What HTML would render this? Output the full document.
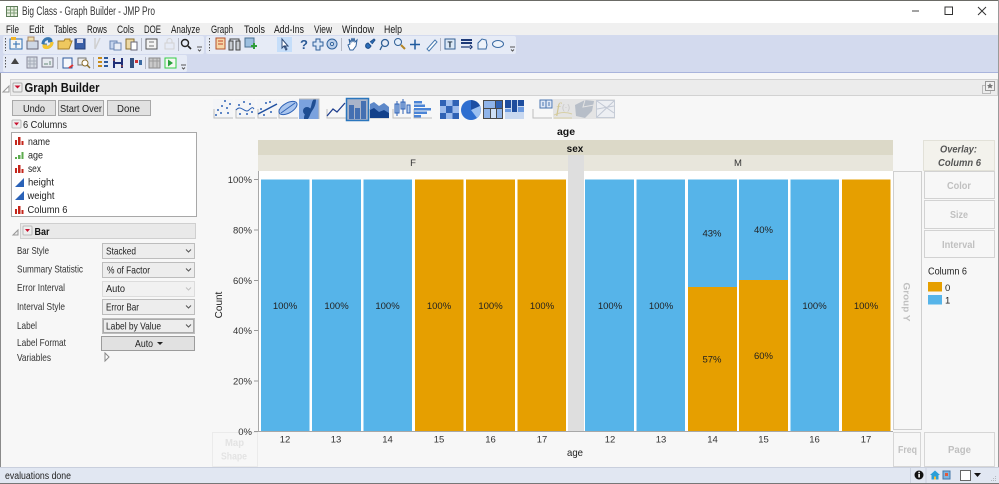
<!DOCTYPE html>
<html><head><meta charset="utf-8"><title>Big Class - Graph Builder - JMP Pro</title>
<style>
html,body{margin:0;padding:0;background:#fff;width:999px;height:484px;overflow:hidden}
svg{display:block}
text{font-family:"Liberation Sans",sans-serif;font-size:10px;fill:#222}
.m{font-size:11px;fill:#1a1a1a}
.c{text-anchor:middle}
.g{font-weight:bold;fill:#c0c0c0;text-anchor:middle;font-size:10.5px}
.v{font-size:9.5px;fill:#222;text-anchor:middle}
.a{font-size:9.5px;fill:#333;text-anchor:end}
.p{font-size:10.5px;fill:#333}
.d{font-size:10.5px;fill:#222}
.t{font-size:9.5px;text-anchor:middle;fill:#333}
.bt{fill:#e1e1e1;stroke:#a8a8a8}
.dd{fill:#ededed;stroke:#bdbdbd}
.ch{fill:none;stroke:#555;stroke-width:1}
</style></head><body>
<svg width="999" height="484" viewBox="0 0 999 484" xmlns="http://www.w3.org/2000/svg">
<rect width="999" height="484" fill="#f7f7f7"/>
<rect width="999" height="23" fill="#fff"/>
<rect width="999" height="1" fill="#6b6b66"/>
<!-- title icon -->
<rect x="6.500" y="6.500" width="11" height="10" fill="#e8efe0" stroke="#5f7d5a"/>
<path d="M7 10h10M7 13h10M10.500 7v9M14 7v9" stroke="#7f9f78" fill="none"/>
<text x="22" y="15" style="font-size:11.500px;fill:#333" textLength="133" lengthAdjust="spacingAndGlyphs">Big Class - Graph Builder - JMP Pro</text>
<path d="M912 11h7" stroke="#444"/>
<rect x="945" y="7" width="7.500" height="7.500" fill="none" stroke="#333" stroke-width="1"/>
<path d="M978 7l8 8M986 7l-8 8" stroke="#333"/>
<!-- menu -->
<rect y="23" width="999" height="12" fill="#f0f0f0"/>
<text class="m" x="6" y="33" textLength="13" lengthAdjust="spacingAndGlyphs">File</text><text class="m" x="29" y="33" textLength="15" lengthAdjust="spacingAndGlyphs">Edit</text><text class="m" x="54" y="33" textLength="23" lengthAdjust="spacingAndGlyphs">Tables</text><text class="m" x="87" y="33" textLength="20" lengthAdjust="spacingAndGlyphs">Rows</text><text class="m" x="117" y="33" textLength="17" lengthAdjust="spacingAndGlyphs">Cols</text><text class="m" x="144" y="33" textLength="17" lengthAdjust="spacingAndGlyphs">DOE</text><text class="m" x="171" y="33" textLength="29" lengthAdjust="spacingAndGlyphs">Analyze</text><text class="m" x="211" y="33" textLength="22" lengthAdjust="spacingAndGlyphs">Graph</text><text class="m" x="244" y="33" textLength="21" lengthAdjust="spacingAndGlyphs">Tools</text><text class="m" x="274" y="33" textLength="30" lengthAdjust="spacingAndGlyphs">Add-Ins</text><text class="m" x="314" y="33" textLength="18" lengthAdjust="spacingAndGlyphs">View</text><text class="m" x="342" y="33" textLength="32" lengthAdjust="spacingAndGlyphs">Window</text><text class="m" x="384" y="33" textLength="18" lengthAdjust="spacingAndGlyphs">Help</text>
<!-- toolbar -->
<rect y="35" width="999" height="37" fill="#d3daee"/>
<rect y="72" width="999" height="1" fill="#a9b4dc"/>
<rect x="3" y="36" width="201" height="18" rx="2" fill="#e6ebf6"/>
<rect x="206" y="36" width="310" height="18" rx="2" fill="#e6ebf6"/>
<rect x="3" y="55" width="184" height="17" rx="2" fill="#e6ebf6"/>
<path d="M5.500 38v13M5.500 57v12M209.500 38v13" stroke="#555" stroke-dasharray="1.500 1.500"/>
<!-- row 1 icons -->
<rect x="10" y="39" width="12" height="10" fill="#f5f5f5" stroke="#2a6bb0"/><rect x="11" y="37" width="5" height="3" fill="#f0b429"/><path d="M13 44h7M16 41v7" stroke="#2a6bb0"/>
<rect x="27" y="41" width="11" height="8" fill="#cfd8e6" stroke="#667"/><rect x="28" y="37" width="6" height="4" fill="#efe0b0" stroke="#a86"/>
<path d="M43 44c0-6 8-7 8-3h-3M52 42c0 6-8 7-8 3h3" stroke="#3877b0" stroke-width="3" fill="none"/><path d="M52 42c0 6-8 7-8 4h3" stroke="#f5c631" stroke-width="3" fill="none"/>
<path d="M58 41h6l1-2h5v2l2 0-3 8H58z" fill="#efc85f" stroke="#a77d24"/>
<rect x="75" y="39" width="10" height="10" fill="#3a5fa8" stroke="#243f7a"/><rect x="77" y="39" width="6" height="4" fill="#dde"/>
<path d="M95 38v11M100 38l-5 11" stroke="#cfcfcf" stroke-width="1.500" fill="none"/>
<rect x="110" y="41" width="7" height="8" fill="#c6d6ee" stroke="#6a87b4"/><rect x="114" y="43" width="7" height="7" fill="#e9eef6" stroke="#6a87b4"/>
<rect x="126" y="39" width="8" height="10" fill="#ecd9a4" stroke="#8b6f2f"/><rect x="131" y="42" width="6" height="8" fill="#fff" stroke="#667"/>
<path d="M141.500 38v13" stroke="#b4b8c4"/>
<rect x="146" y="39" width="11" height="10" fill="#f3f3f3" stroke="#555"/><path d="M149 42h5M149 46h5" stroke="#777"/>
<path d="M165 43v6h9v-6zM167 43v-2a2.500 2.500 0 015 0v2" fill="none" stroke="#d2d2d2"/>
<path d="M178.500 38v13" stroke="#b4b8c4"/>
<circle cx="185" cy="43" r="3.500" fill="none" stroke="#222" stroke-width="1.400"/><path d="M188 46l3 3" stroke="#222" stroke-width="1.600"/>
<path d="M197 47h5M198 49.500l1.500 1.500 1.500-1.500" stroke="#555" fill="none"/>
<rect x="216" y="38" width="9" height="11" fill="#f6d6a8" stroke="#b4522d"/><path d="M218 41h5M218 44h5" stroke="#c4472d"/>
<rect x="229" y="41" width="4" height="9" fill="#c8ccd2" stroke="#444"/><rect x="236" y="41" width="4" height="9" fill="#c8ccd2" stroke="#444"/><path d="M230 41v-2h9v2" fill="none" stroke="#444"/>
<rect x="245" y="38" width="9" height="9" fill="#9dc0e0" stroke="#4a6f90"/><path d="M251 46h6M254 43v6" stroke="#2f9e3a" stroke-width="2"/>
<!-- tools -->
<rect x="277" y="37" width="15" height="15" fill="#c5defa"/>
<path d="M282 39v9l2-2 2 4 1-1-2-3h3z" fill="#fff" stroke="#2f4c78"/>
<text x="300" y="49" style="font-size:13px;font-weight:bold;fill:#2b5a96">?</text>
<path d="M316 39h4v3h3v4h-3v4h-4v-4h-3v-4h3z" fill="#dbe7f6" stroke="#30629c"/>
<circle cx="332" cy="44" r="5" fill="#bcd0ea" stroke="#30629c"/><circle cx="332" cy="44" r="1.500" fill="#fff" stroke="#30629c"/>
<path d="M341.500 38v13" stroke="#b4b8c4"/>
<path d="M348 45l2-1-1-5 2 3 1-4 1 4 1-4 1 4 2-2-1 6-3 4h-3z" fill="#fff" stroke="#30629c"/>
<path d="M367 48c-2-1-2-4 1-5l3 3c-1 2-3 3-4 2zM370 42l4-3 1 1-3 4" fill="#2b6cb8" stroke="#1f4f8a"/>
<circle cx="385" cy="43" r="3.500" fill="none" stroke="#2f5f96" stroke-width="1.300"/><path d="M382 46l-2 4" stroke="#2f5f96" stroke-width="1.300"/>
<circle cx="398" cy="42" r="3.500" fill="#e4eefa" stroke="#2f5f96"/><path d="M401 45l4 4" stroke="#b58628" stroke-width="2"/>
<path d="M415 39.500v10M410 44.500h10" stroke="#1f5a9e" stroke-width="1.500"/>
<path d="M427 49l8-9 2 2-8 9z" fill="#fff" stroke="#4a7bb0"/>
<path d="M440.500 38v13" stroke="#b4b8c4"/>
<rect x="445" y="39" width="10" height="10" fill="#dbe8f6" stroke="#345f92"/><text x="447.500" y="47.500" style="font-size:8px;font-weight:bold;fill:#123">T</text>
<path d="M461 40h11M461 43h11" stroke="#1e3a78" stroke-width="2"/><path d="M461 47h9M470 45l2 2-2 2" stroke="#1e3a78" stroke-width="1.300" fill="none"/>
<path d="M478 49v-6l4-4 4 1 1 5-1 4z" fill="#eef3fa" stroke="#3a6aa2"/>
<ellipse cx="498" cy="44" rx="5.500" ry="3.500" fill="#eef3fa" stroke="#3a6aa2"/>
<path d="M510 47h5M511 49.500l1.500 1.500 1.500-1.500" stroke="#555" fill="none"/>
<!-- row 2 icons -->
<path d="M15 58l4 6h-8z" fill="#444"/>
<rect x="27" y="57" width="10" height="11" fill="#d6dbe3" stroke="#889"/><path d="M27 61h10M27 64h10M30 57v11M34 57v11" stroke="#a5acb8"/>
<rect x="42" y="58" width="11" height="9" fill="#e7ebf0" stroke="#778"/><path d="M44 64h4M50 61v4" stroke="#687"/>
<path d="M57.500 57v12" stroke="#b4b8c4"/>
<rect x="63" y="58" width="9" height="10" fill="#f5f7fb" stroke="#2e5a9c"/><path d="M69 68l4-3" stroke="#d33" stroke-width="2"/>
<rect x="78" y="58" width="8" height="7" fill="#eee" stroke="#777"/><circle cx="85" cy="63" r="3" fill="#fff" stroke="#8a6d2b"/><path d="M87 65l3 3" stroke="#8a6d2b" stroke-width="1.500"/>
<path d="M93.500 57v12" stroke="#b4b8c4"/>
<path d="M98 58h4M98 62h4M98 66h4" stroke="#c78b1a" stroke-width="2"/><path d="M104 58h4M104 62h4M104 66h4" stroke="#2e5a9c" stroke-width="2"/>
<path d="M114 58v10M122 58v10M114 63h8" stroke="#1f2f78" stroke-width="2"/><path d="M113 60h2M121 66h2" stroke="#c53"/>
<rect x="130" y="58" width="4" height="10" fill="#33507f"/><rect x="135" y="60" width="3" height="3" fill="#c33"/><rect x="139" y="60" width="3" height="5" fill="#3a6aa2"/>
<path d="M145.500 57v12" stroke="#b4b8c4"/>
<rect x="149" y="58" width="11" height="10" fill="#c9c9c9" stroke="#8a8a8a"/><path d="M149 61h11M153 58v10M157 58v10" stroke="#9a9a9a"/>
<rect x="165" y="58" width="11" height="10" fill="#f4f7f2" stroke="#3c4"/><path d="M168 59.500l5 3.500-5 3.500z" fill="#2aa13c"/>
<path d="M181 65h5M182 67.500l1.500 1.500 1.500-1.500" stroke="#555" fill="none"/>
<!-- graph builder header -->
<path d="M3 92l6-6v6z" fill="#fff" stroke="#999"/>
<rect x="10.500" y="79.500" width="987" height="16" fill="#ececec" stroke="#d2d2d2"/>
<rect x="13" y="83" width="9" height="9" rx="1" fill="#eee" stroke="#aaa"/><path d="M14.500 85.500h6l-3 3z" fill="#c8102e"/>
<text x="24.500" y="92" style="font-size:12.500px;font-weight:bold;fill:#111" textLength="75" lengthAdjust="spacingAndGlyphs">Graph Builder</text>
<rect x="982.500" y="85.500" width="8" height="8" fill="none" stroke="#bbb"/><rect x="985.500" y="81.500" width="9" height="9" fill="#f0f0f0" stroke="#999"/><path d="M990 83l1 2h2l-1.500 1.500.5 2-2-1-2 1 .5-2L987 85h2z" fill="#777"/>
<!-- buttons -->
<rect x="12.500" y="100.500" width="43" height="15" class="bt"/><text class="c" x="34" y="112" style="font-size:10.500px" textLength="22" lengthAdjust="spacingAndGlyphs">Undo</text>
<rect x="58.500" y="100.500" width="45" height="15" class="bt"/><text class="c" x="81" y="112" style="font-size:10.500px" textLength="42" lengthAdjust="spacingAndGlyphs">Start Over</text>
<rect x="107.500" y="100.500" width="43" height="15" class="bt"/><text class="c" x="128.500" y="112" style="font-size:10.500px" textLength="23" lengthAdjust="spacingAndGlyphs">Done</text>
<!-- columns -->
<rect x="12" y="120" width="9" height="8" rx="1" fill="#eee" stroke="#bbb"/><path d="M14 122.500h5l-2.500 3z" fill="#c8102e"/>
<text x="23" y="128" class="d" textLength="44" lengthAdjust="spacingAndGlyphs">6 Columns</text>
<rect x="11.500" y="132.500" width="185" height="84" fill="#fff" stroke="#a8a8a8"/>
<g fill="#c4261b"><path d="M15 145v-5h2v5zM18 145v-8h2.500v8zM21.500 145v-4h2v4z"/><path d="M15 173v-5h2v5zM18 173v-8h2.500v8zM21.500 173v-4h2v4z"/><path d="M15 214v-5h2v5zM18 214v-8h2.500v8zM21.500 214v-4h2v4z"/></g>
<path d="M15 159v-2h2v2zM18 159v-4h2.500v4zM21.500 159v-7h2v7z" fill="#5cab4e"/>
<path d="M15 187l9-9v9z" fill="#2a62b8"/><path d="M15 200l9-9v9z" fill="#2a62b8"/>
<text class="d" x="28" y="145" textLength="22" lengthAdjust="spacingAndGlyphs">name</text><text class="d" x="28" y="158.500" textLength="15" lengthAdjust="spacingAndGlyphs">age</text><text class="d" x="28" y="172" textLength="13" lengthAdjust="spacingAndGlyphs">sex</text><text class="d" x="28" y="185.500" textLength="26" lengthAdjust="spacingAndGlyphs">height</text><text class="d" x="27.500" y="199" textLength="27" lengthAdjust="spacingAndGlyphs">weight</text><text class="d" x="27.500" y="213" textLength="40" lengthAdjust="spacingAndGlyphs">Column 6</text>
<!-- bar panel -->
<path d="M13 235l5-5v5z" fill="#eee" stroke="#999"/>
<rect x="20.500" y="223.500" width="175" height="15" fill="#e9e9e9" stroke="#cfcfcf"/>
<rect x="23" y="226" width="9" height="9" rx="1" fill="#eee" stroke="#bbb"/><path d="M25 229h5l-2.500 3z" fill="#c8102e"/>
<text x="34.500" y="235" style="font-size:10.500px;font-weight:bold;fill:#111" textLength="15" lengthAdjust="spacingAndGlyphs">Bar</text>
<text class="p" x="17" y="254" textLength="32" lengthAdjust="spacingAndGlyphs">Bar Style</text><text class="p" x="17" y="272.500" textLength="66" lengthAdjust="spacingAndGlyphs">Summary Statistic</text><text class="p" x="17" y="291" textLength="48" lengthAdjust="spacingAndGlyphs">Error Interval</text><text class="p" x="17" y="310" textLength="48" lengthAdjust="spacingAndGlyphs">Interval Style</text><text class="p" x="17" y="329" textLength="20" lengthAdjust="spacingAndGlyphs">Label</text><text class="p" x="17" y="346" textLength="49" lengthAdjust="spacingAndGlyphs">Label Format</text><text class="p" x="17" y="361" textLength="34" lengthAdjust="spacingAndGlyphs">Variables</text>
<rect x="102.500" y="243.500" width="92" height="15" class="dd"/><text class="d" x="106" y="254.500" textLength="30" lengthAdjust="spacingAndGlyphs">Stacked</text><path d="M186 249.500l2.500 2.500 2.500-2.500" class="ch"/>
<rect x="102.500" y="262.500" width="92" height="15" class="dd"/><text class="d" x="107" y="273.500" textLength="43" lengthAdjust="spacingAndGlyphs">% of Factor</text><path d="M186 268.500l2.500 2.500 2.500-2.500" class="ch"/>
<rect x="102.500" y="281.500" width="92" height="15" fill="#f1f1f1" stroke="#dcdcdc"/><text class="d" x="106" y="292" textLength="19" lengthAdjust="spacingAndGlyphs">Auto</text><path d="M186 287.500l2.500 2.500 2.500-2.500" fill="none" stroke="#c0c0c0"/>
<rect x="102.500" y="299.500" width="92" height="15" class="dd"/><text class="d" x="106" y="310.500" textLength="33" lengthAdjust="spacingAndGlyphs">Error Bar</text><path d="M186 305.500l2.500 2.500 2.500-2.500" class="ch"/>
<rect x="102.500" y="318.500" width="92" height="15" class="dd"/><rect x="103.500" y="319.500" width="90" height="13" fill="none" stroke="#666" stroke-dasharray="1 1"/><text class="d" x="106" y="329.500" textLength="55" lengthAdjust="spacingAndGlyphs">Label by Value</text><path d="M186 324.500l2.500 2.500 2.500-2.500" class="ch"/>
<rect x="101.500" y="336.500" width="93" height="14" fill="#e1e1e1" stroke="#9c9c9c"/><text class="d" x="135" y="347" textLength="18" lengthAdjust="spacingAndGlyphs">Auto</text><path d="M157 342h6l-3 3z" fill="#222"/>
<path d="M105 353v8l4-4z" fill="#fff" stroke="#888"/>
<!-- chart type icons -->
<g fill="#f4f5f7"><rect x="213" y="99" width="20" height="20"/><rect x="235" y="99" width="20" height="20"/><rect x="257" y="99" width="20" height="20"/><rect x="278" y="99" width="20" height="20"/></g>
<path d="M214 109v9h19M236 109v9h19M258 109v9h19M279 109v9h19M327 109v9h19M370 109v9h19M393 109v9h18M414 109v9h18M533 109v9h19" stroke="#bdbdbd" fill="none"/>
<g fill="#2f62b5"><circle cx="218" cy="110" r="1"/><circle cx="222" cy="106" r="1"/><circle cx="225" cy="101" r="1"/><circle cx="227" cy="108" r="1"/><circle cx="230" cy="104" r="1"/><circle cx="221" cy="113" r="1"/><circle cx="228" cy="113" r="1"/><circle cx="216" cy="115" r="1"/>
<circle cx="239" cy="105" r="1"/><circle cx="244" cy="102" r="1"/><circle cx="250" cy="104" r="1"/><circle cx="240" cy="114" r="1"/><circle cx="247" cy="114" r="1"/><circle cx="252" cy="112" r="1"/>
<circle cx="261" cy="109" r="1"/><circle cx="266" cy="103" r="1"/><circle cx="270" cy="102" r="1"/><circle cx="264" cy="115" r="1"/><circle cx="271" cy="112" r="1"/></g>
<path d="M236 110c5-6 9 4 13 0s4-2 5-1" fill="none" stroke="#2f62b5"/>
<path d="M258 114l19-10" fill="none" stroke="#1f4fa0" stroke-width="1.500"/>
<ellipse cx="288" cy="108" rx="10" ry="5" transform="rotate(-30 288 108)" fill="#a9c5ee" stroke="#2f62b5"/><path d="M281 113l14-10" stroke="#2f62b5"/>
<rect x="299" y="99" width="20" height="20" fill="#7ba2de"/><path d="M304 119c0-7 4-7 6-10s1-7 4-10h2c0 6-2 9-4 12s-2 5-4 8z" fill="#1e4d92"/><circle cx="307" cy="111" r="4" fill="#1e4d92"/><path d="M299 99h20v20" fill="none" stroke="#bbb"/>
<path d="M327 116l6-7 4 3 8-9" fill="none" stroke="#1f3f8f" stroke-width="1.300"/>
<rect x="346.500" y="98.500" width="22" height="22" fill="#a9b4c9" stroke="#2a76bd" stroke-width="1.500"/>
<g fill="#4470b2"><rect x="349" y="105" width="5" height="14"/><rect x="355" y="108" width="5" height="11"/><rect x="361" y="101" width="5" height="18"/></g>
<path d="M370 118v-14l4-2 5 4 5-3 5 4v11z" fill="#5d88c9"/><path d="M370 118v-8l4-2 5 4 5-2 5 3v5z" fill="#12408a"/>
<g fill="#b9d0f0" stroke="#2f62b5"><rect x="395" y="104" width="4" height="9"/><rect x="401" y="102" width="4" height="7"/><rect x="407" y="105" width="3" height="8"/></g><path d="M397 101v15M403 99v15" stroke="#2f62b5"/>
<g fill="#4b84d6"><rect x="414" y="101" width="8" height="2.500"/><rect x="414" y="104.500" width="11" height="2.500"/><rect x="414" y="108" width="17" height="2.500"/><rect x="414" y="111.500" width="13" height="2.500"/><rect x="414" y="115" width="7" height="2.500"/></g>
<!-- heatmap -->
<rect x="440" y="100" width="19" height="19" fill="#2f62b5"/><rect x="446" y="100" width="6.500" height="6" fill="#9cbbec"/><rect x="440" y="106" width="6" height="7" fill="#9cbbec"/><rect x="452.500" y="106" width="6.500" height="7" fill="#9cbbec"/><rect x="446" y="113" width="6.500" height="6" fill="#9cbbec"/>
<circle cx="471" cy="110" r="10" fill="#2f6fd0"/><path d="M471 110V100a10 10 0 019 6z" fill="#1c4ea3"/><path d="M471 110l9-4a10 10 0 01-3 12z" fill="#9cc0f0"/>
<rect x="483" y="100" width="20" height="19" fill="#4a4a4a"/><rect x="484" y="101" width="11" height="7" fill="#8fb4ea"/><rect x="496" y="101" width="6" height="7" fill="#2f62b5"/><rect x="484" y="109" width="6" height="9" fill="#8fb4ea"/><rect x="491" y="109" width="5" height="9" fill="#cfe0f6"/><rect x="497" y="109" width="5" height="9" fill="#8fb4ea"/>
<rect x="505" y="100" width="19" height="19" fill="#c8d8f0"/><rect x="505" y="100" width="6" height="8" fill="#1e4d9e"/><rect x="512" y="100" width="5" height="12" fill="#1e4d9e"/><rect x="518" y="100" width="6" height="6" fill="#1e4d9e"/><rect x="505" y="109" width="6" height="3" fill="#6d9be0"/><rect x="518" y="107" width="6" height="5" fill="#6d9be0"/>
<!-- extras -->
<rect x="540" y="100" width="12" height="8" fill="#dfe7f5" stroke="#4a74b0"/><path d="M546 100v8M542 103h2M548 103h2M542 105h2M548 105h2" stroke="#4a74b0"/>
<rect x="553" y="99" width="62" height="20" fill="#e4e4e4"/>
<path d="M554 115c5-2 10-4 18-1M554 118h18" stroke="#d7cfa6" fill="none"/><text x="556" y="113" style="font-size:15px;font-family:'Liberation Serif',serif;font-style:italic;fill:#d2c794">f</text><text x="562" y="110" style="font-size:8px;fill:#c4c4c4">(·)</text>
<path d="M575 105l10-5 9 1-2 10-7 7-9-2z" fill="#b7bec8"/><path d="M585 100l-2 7 11-2" stroke="#e4e4e4" fill="none"/>
<rect x="596.500" y="100.500" width="18" height="17" fill="#edeff3" stroke="#c6ccd6"/><path d="M597 101l17 12M614 101l-17 16M597 109l17-3" stroke="#c2c8d4" fill="none"/>
<!-- map shape (behind axis labels) -->
<rect x="212.500" y="432.500" width="45" height="34" fill="#f7f7f7" stroke="#ebebeb"/>
<text x="234.500" y="446" text-anchor="middle" style="font-size:10.500px;font-weight:bold;fill:#e3e3e3" textLength="19" lengthAdjust="spacingAndGlyphs">Map</text><text x="234" y="459.500" text-anchor="middle" style="font-size:10.500px;font-weight:bold;fill:#e3e3e3" textLength="26" lengthAdjust="spacingAndGlyphs">Shape</text>
<!-- graph -->
<text class="c" x="566" y="135" style="font-size:10.500px;font-weight:bold;fill:#111">age</text>
<rect x="258" y="140" width="635" height="15" fill="#dcd9c8"/>
<rect x="258" y="155" width="635" height="16" fill="#e8e6dc"/>
<rect x="259" y="171" width="309" height="260" fill="#fff"/>
<rect x="584" y="171" width="309" height="260" fill="#fff"/>
<rect x="568" y="155" width="16" height="276" fill="#dedede"/>
<text class="c" x="575" y="152" style="font-size:10px;font-weight:bold;fill:#111">sex</text>
<text class="c" x="413" y="166" style="font-size:9.500px;fill:#333">F</text>
<text class="c" x="738" y="166" style="font-size:9.500px;fill:#333">M</text>
<path d="M258.500 171v260.500H893" fill="none" stroke="#a8a8a8"/>
<path d="M254 179.500h4M254 230h4M254 280.500h4M254 330.500h4M254 381h4M254 431.500h4" stroke="#999"/>
<text class="a" x="252" y="183">100%</text><text class="a" x="252" y="233.500">80%</text><text class="a" x="252" y="284">60%</text><text class="a" x="252" y="334">40%</text><text class="a" x="252" y="384.500">20%</text><text class="a" x="252" y="435">0%</text>
<text transform="translate(222 305) rotate(-90)" class="c" style="font-size:10px;fill:#222">Count</text>
<!-- bars -->
<g fill="#56b4e9"><rect x="261" y="179.500" width="48.500" height="251.500"/><rect x="312" y="179.500" width="49" height="251.500"/><rect x="363.500" y="179.500" width="48.500" height="251.500"/><rect x="585" y="179.500" width="49" height="251.500"/><rect x="636.500" y="179.500" width="48.500" height="251.500"/><rect x="688" y="179.500" width="49" height="251.500"/><rect x="739" y="179.500" width="49" height="251.500"/><rect x="790.500" y="179.500" width="48.500" height="251.500"/></g>
<g fill="#e69f00"><rect x="415" y="179.500" width="48.500" height="251.500"/><rect x="466" y="179.500" width="49" height="251.500"/><rect x="517.500" y="179.500" width="48.500" height="251.500"/><rect x="842" y="179.500" width="48.500" height="251.500"/><rect x="688" y="287" width="49" height="144"/><rect x="739" y="280" width="49" height="151"/></g>
<text class="v" x="285" y="309">100%</text><text class="v" x="336.500" y="309">100%</text><text class="v" x="387.500" y="309">100%</text><text class="v" x="439" y="309">100%</text><text class="v" x="490.500" y="309">100%</text><text class="v" x="542" y="309">100%</text><text class="v" x="610" y="309">100%</text><text class="v" x="661" y="309">100%</text><text class="v" x="814.500" y="309">100%</text><text class="v" x="866" y="309">100%</text>
<text class="v" x="712" y="236.500">43%</text><text class="v" x="763.500" y="233">40%</text><text class="v" x="712" y="362.500">57%</text><text class="v" x="763.500" y="359">60%</text>
<text class="t" x="285" y="442.500">12</text><text class="t" x="336" y="442.500">13</text><text class="t" x="387.500" y="442.500">14</text><text class="t" x="439" y="442.500">15</text><text class="t" x="490.500" y="442.500">16</text><text class="t" x="542" y="442.500">17</text><text class="t" x="610" y="442.500">12</text><text class="t" x="661" y="442.500">13</text><text class="t" x="712.500" y="442.500">14</text><text class="t" x="763.500" y="442.500">15</text><text class="t" x="814.500" y="442.500">16</text><text class="t" x="866" y="442.500">17</text>
<text class="c" x="575" y="456" style="font-size:10.500px;fill:#222" textLength="16" lengthAdjust="spacingAndGlyphs">age</text>
<!-- right zones -->
<rect x="893.500" y="171.500" width="28" height="258" fill="#f7f7f7" stroke="#cfcfcf"/>
<text transform="translate(903.500 302) rotate(90)" class="g" style="font-size:9.500px" textLength="39" lengthAdjust="spacingAndGlyphs">Group Y</text>
<rect x="923.500" y="140.500" width="71" height="30" fill="#f3f2ec" stroke="#e2e1d8"/>
<text class="c" x="958.500" y="152.500" style="font-size:10.500px;font-weight:bold;font-style:italic;fill:#555" textLength="37" lengthAdjust="spacingAndGlyphs">Overlay:</text>
<text class="c" x="959.500" y="166" style="font-size:10.500px;font-weight:bold;font-style:italic;fill:#555" textLength="43" lengthAdjust="spacingAndGlyphs">Column 6</text>
<rect x="924.500" y="171.500" width="70" height="27" fill="#f7f7f7" stroke="#d2d2d2"/><text class="g" x="959" y="189" textLength="24" lengthAdjust="spacingAndGlyphs">Color</text>
<rect x="924.500" y="200.500" width="70" height="28" fill="#f7f7f7" stroke="#d2d2d2"/><text class="g" x="959" y="218" textLength="18" lengthAdjust="spacingAndGlyphs">Size</text>
<rect x="924.500" y="230.500" width="70" height="27" fill="#f7f7f7" stroke="#d2d2d2"/><text class="g" x="958.500" y="248" textLength="33" lengthAdjust="spacingAndGlyphs">Interval</text>
<text class="d" x="928" y="274.500" textLength="39" lengthAdjust="spacingAndGlyphs">Column 6</text>
<rect x="928" y="282" width="14" height="9.500" fill="#e69f00"/><rect x="928" y="295" width="14" height="9.500" fill="#56b4e9"/>
<text x="945" y="291" style="font-size:9.500px">0</text><text x="945" y="303.500" style="font-size:9.500px">1</text>
<rect x="893.500" y="432.500" width="27" height="34" fill="#f7f7f7" stroke="#d6d6d6"/><text class="g" x="907.500" y="453" textLength="19" lengthAdjust="spacingAndGlyphs">Freq</text>
<rect x="924.500" y="432.500" width="70" height="34" fill="#f7f7f7" stroke="#d6d6d6"/><text class="g" x="959.500" y="453" textLength="23" lengthAdjust="spacingAndGlyphs">Page</text>
<!-- borders -->
<rect x="0" y="73" width="1" height="394" fill="#8a8a8a"/>
<rect x="998" y="0" width="1" height="484" fill="#9a9a9a"/>
<!-- status -->
<rect y="467" width="999" height="16" fill="#e1e7f2"/>
<rect y="467" width="999" height="1" fill="#c9cfdd"/>
<rect y="483" width="999" height="1" fill="#777"/>
<text x="5" y="479" style="font-size:10px" textLength="66" lengthAdjust="spacingAndGlyphs">evaluations done</text>
<path d="M910.500 468v15M926 468v15" stroke="#cbd2e0"/>
<circle cx="919" cy="475" r="4.500" fill="#111"/><rect x="918.300" y="474" width="1.600" height="3.500" fill="#fff"/><rect x="918.300" y="471.800" width="1.600" height="1.400" fill="#fff"/>
<path d="M930 475l5-4.500 5 4.500h-1.500v4.500h-7V475z" fill="#2a9fd8"/><rect x="934" y="476.500" width="2" height="3" fill="#f0c040"/>
<rect x="943" y="471" width="7" height="8" fill="#7fb5e0" stroke="#4577a8"/><rect x="945" y="473" width="3" height="3" fill="#e15a3c"/>
<rect x="960.500" y="470.500" width="10" height="10" fill="#fff" stroke="#666"/>
<path d="M974 473h7l-3.500 4z" fill="#111"/>
<g fill="#b4b8bf"><rect x="995" y="480" width="1" height="1"/><rect x="993" y="480" width="1" height="1"/><rect x="991" y="480" width="1" height="1"/><rect x="995" y="478" width="1" height="1"/><rect x="993" y="478" width="1" height="1"/><rect x="995" y="476" width="1" height="1"/></g>
</svg>
</body></html>
